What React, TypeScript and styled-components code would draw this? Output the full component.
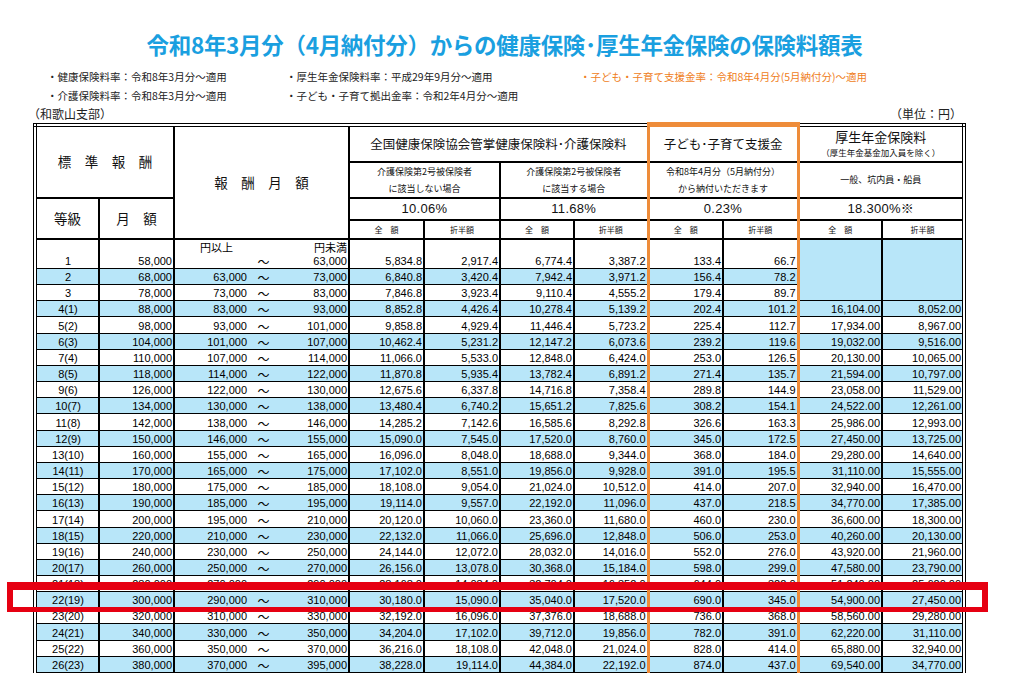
import styled, { createGlobalStyle } from 'styled-components';

const BLUE = '#b8e6f9';
const ORANGE = '#ee8c3a';

const GlobalStyle = createGlobalStyle`
  html, body {
    margin: 0;
    padding: 0;
    background: #ffffff;
  }
  body {
    font-family: "Noto Sans CJK JP", "Liberation Sans", sans-serif;
    color: #111111;
  }
`;

// 等級, 月額, 以上, 未満, 健保(全額, 折半), 介護(全額, 折半), 子ども(全額, 折半), 厚年(全額, 折半)
const rows: string[][] = [
    ['1', '58,000', '', '63,000', '5,834.8', '2,917.4', '6,774.4', '3,387.2', '133.4', '66.7'],
    ['2', '68,000', '63,000', '73,000', '6,840.8', '3,420.4', '7,942.4', '3,971.2', '156.4', '78.2'],
    ['3', '78,000', '73,000', '83,000', '7,846.8', '3,923.4', '9,110.4', '4,555.2', '179.4', '89.7'],
    ['4(1)', '88,000', '83,000', '93,000', '8,852.8', '4,426.4', '10,278.4', '5,139.2', '202.4', '101.2', '16,104.00', '8,052.00'],
    ['5(2)', '98,000', '93,000', '101,000', '9,858.8', '4,929.4', '11,446.4', '5,723.2', '225.4', '112.7', '17,934.00', '8,967.00'],
    ['6(3)', '104,000', '101,000', '107,000', '10,462.4', '5,231.2', '12,147.2', '6,073.6', '239.2', '119.6', '19,032.00', '9,516.00'],
    ['7(4)', '110,000', '107,000', '114,000', '11,066.0', '5,533.0', '12,848.0', '6,424.0', '253.0', '126.5', '20,130.00', '10,065.00'],
    ['8(5)', '118,000', '114,000', '122,000', '11,870.8', '5,935.4', '13,782.4', '6,891.2', '271.4', '135.7', '21,594.00', '10,797.00'],
    ['9(6)', '126,000', '122,000', '130,000', '12,675.6', '6,337.8', '14,716.8', '7,358.4', '289.8', '144.9', '23,058.00', '11,529.00'],
    ['10(7)', '134,000', '130,000', '138,000', '13,480.4', '6,740.2', '15,651.2', '7,825.6', '308.2', '154.1', '24,522.00', '12,261.00'],
    ['11(8)', '142,000', '138,000', '146,000', '14,285.2', '7,142.6', '16,585.6', '8,292.8', '326.6', '163.3', '25,986.00', '12,993.00'],
    ['12(9)', '150,000', '146,000', '155,000', '15,090.0', '7,545.0', '17,520.0', '8,760.0', '345.0', '172.5', '27,450.00', '13,725.00'],
    ['13(10)', '160,000', '155,000', '165,000', '16,096.0', '8,048.0', '18,688.0', '9,344.0', '368.0', '184.0', '29,280.00', '14,640.00'],
    ['14(11)', '170,000', '165,000', '175,000', '17,102.0', '8,551.0', '19,856.0', '9,928.0', '391.0', '195.5', '31,110.00', '15,555.00'],
    ['15(12)', '180,000', '175,000', '185,000', '18,108.0', '9,054.0', '21,024.0', '10,512.0', '414.0', '207.0', '32,940.00', '16,470.00'],
    ['16(13)', '190,000', '185,000', '195,000', '19,114.0', '9,557.0', '22,192.0', '11,096.0', '437.0', '218.5', '34,770.00', '17,385.00'],
    ['17(14)', '200,000', '195,000', '210,000', '20,120.0', '10,060.0', '23,360.0', '11,680.0', '460.0', '230.0', '36,600.00', '18,300.00'],
    ['18(15)', '220,000', '210,000', '230,000', '22,132.0', '11,066.0', '25,696.0', '12,848.0', '506.0', '253.0', '40,260.00', '20,130.00'],
    ['19(16)', '240,000', '230,000', '250,000', '24,144.0', '12,072.0', '28,032.0', '14,016.0', '552.0', '276.0', '43,920.00', '21,960.00'],
    ['20(17)', '260,000', '250,000', '270,000', '26,156.0', '13,078.0', '30,368.0', '15,184.0', '598.0', '299.0', '47,580.00', '23,790.00'],
    ['21(18)', '280,000', '270,000', '290,000', '28,168.0', '14,084.0', '32,704.0', '16,352.0', '644.0', '322.0', '51,240.00', '25,620.00'],
    ['22(19)', '300,000', '290,000', '310,000', '30,180.0', '15,090.0', '35,040.0', '17,520.0', '690.0', '345.0', '54,900.00', '27,450.00'],
    ['23(20)', '320,000', '310,000', '330,000', '32,192.0', '16,096.0', '37,376.0', '18,688.0', '736.0', '368.0', '58,560.00', '29,280.00'],
    ['24(21)', '340,000', '330,000', '350,000', '34,204.0', '17,102.0', '39,712.0', '19,856.0', '782.0', '391.0', '62,220.00', '31,110.00'],
    ['25(22)', '360,000', '350,000', '370,000', '36,216.0', '18,108.0', '42,048.0', '21,024.0', '828.0', '414.0', '65,880.00', '32,940.00'],
    ['26(23)', '380,000', '370,000', '395,000', '38,228.0', '19,114.0', '44,384.0', '22,192.0', '874.0', '437.0', '69,540.00', '34,770.00'],
];

const colWidths = [64, 75, 175, 75, 76, 74, 74, 75, 75, 84, 82];

function App() {
    return (
        <Page>
            <GlobalStyle />
            <Title>令和8年3月分（4月納付分）からの健康保険･厚生年金保険の保険料額表</Title>

            <Notes>
                <Note>・健康保険料率：令和8年3月分～適用</Note>
                <Note>・厚生年金保険料率：平成29年9月分～適用</Note>
                <Note $accent>・子ども・子育て支援金率：令和8年4月分(5月納付分)～適用</Note>
                <Note>・介護保険料率：令和8年3月分～適用</Note>
                <Note>・子ども・子育て拠出金率：令和2年4月分～適用</Note>
            </Notes>

            <Caption>
                <span>（和歌山支部）</span>
                <span>（単位：円）</span>
            </Caption>

            <TableViewport>
                <RateTable>
                    <colgroup>
                        {colWidths.map((w, i) => <Col key={i} $w={w} />)}
                    </colgroup>
                    <thead>
                        <HeadRow $h={37}>
                            <HeadCell colSpan={2} rowSpan={2} $fs={13.5}>標　準　報　酬</HeadCell>
                            <HeadCell rowSpan={4} $fs={13.5}>報　酬　月　額</HeadCell>
                            <HeadCell colSpan={4} $fs={12.5}>全国健康保険協会管掌健康保険料･介護保険料</HeadCell>
                            <HeadCell colSpan={2} $fs={12.5} $orangeLeft $orangeRight $orangeTop>子ども･子育て支援金</HeadCell>
                            <HeadCell colSpan={2} $fs={13}>
                                <HeadLine>厚生年金保険料</HeadLine>
                                <SubNote>（厚生年金基金加入員を除く）</SubNote>
                            </HeadCell>
                        </HeadRow>
                        <HeadRow $h={33}>
                            <HeadCell colSpan={2} $fs={9}>介護保険第2号被保険者<br />に該当しない場合</HeadCell>
                            <HeadCell colSpan={2} $fs={9}>介護保険第2号被保険者<br />に該当する場合</HeadCell>
                            <HeadCell colSpan={2} $fs={9} $orangeLeft $orangeRight>令和8年4月分（5月納付分）<br />から納付いただきます</HeadCell>
                            <HeadCell colSpan={2} $fs={9}>一般、坑内員・船員</HeadCell>
                        </HeadRow>
                        <HeadRow $h={22}>
                            <HeadCell rowSpan={2} $fs={13.5}>等級</HeadCell>
                            <HeadCell rowSpan={2} $fs={13.5}>月　額</HeadCell>
                            <RateCell colSpan={2}>10.06%</RateCell>
                            <RateCell colSpan={2}>11.68%</RateCell>
                            <RateCell colSpan={2} $orangeLeft $orangeRight>0.23%</RateCell>
                            <RateCell colSpan={2}>18.300%※</RateCell>
                        </HeadRow>
                        <HeadRow $h={16}>
                            <HeadCell $fs={8}>全　額</HeadCell>
                            <HeadCell $fs={8}>折半額</HeadCell>
                            <HeadCell $fs={8}>全　額</HeadCell>
                            <HeadCell $fs={8}>折半額</HeadCell>
                            <HeadCell $fs={8} $orangeLeft>全　額</HeadCell>
                            <HeadCell $fs={8} $orangeRight>折半額</HeadCell>
                            <HeadCell $fs={8}>全　額</HeadCell>
                            <HeadCell $fs={8}>折半額</HeadCell>
                        </HeadRow>
                    </thead>
                    <tbody>
                        {rows.map((r, i) => {
                            const blue = i % 2 === 1;
                            const first = i === 0;
                            return (
                                <DataRow key={r[0]} $h={first ? 30 : 16.16}>
                                    <DataCell $blue={blue} $align="center">{r[0]}</DataCell>
                                    <DataCell $blue={blue}>{r[1]}</DataCell>
                                    <DataCell $blue={blue}>
                                        <Range>
                                            {first && <RangeLabel>円以上</RangeLabel>}
                                            {first && <span />}
                                            {first && <RangeLabel $end>円未満</RangeLabel>}
                                            <span>{r[2]}</span>
                                            <Tilde>～</Tilde>
                                            <span>{r[3]}</span>
                                        </Range>
                                    </DataCell>
                                    <DataCell $blue={blue}>{r[4]}</DataCell>
                                    <DataCell $blue={blue}>{r[5]}</DataCell>
                                    <DataCell $blue={blue}>{r[6]}</DataCell>
                                    <DataCell $blue={blue}>{r[7]}</DataCell>
                                    <DataCell $blue={blue} $orangeLeft>{r[8]}</DataCell>
                                    <DataCell $blue={blue} $orangeRight>{r[9]}</DataCell>
                                    {first && (
                                        <>
                                            <DataCell rowSpan={3} $blue />
                                            <DataCell rowSpan={3} $blue />
                                        </>
                                    )}
                                    {i >= 3 && (
                                        <>
                                            <DataCell $blue={blue}>{r[10]}</DataCell>
                                            <DataCell $blue={blue}>{r[11]}</DataCell>
                                        </>
                                    )}
                                </DataRow>
                            );
                        })}
                        <TailRow>
                            {colWidths.map((_, i) => (
                                <DataCell key={i} $orangeLeft={i === 7} $orangeRight={i === 8} />
                            ))}
                        </TailRow>
                    </tbody>
                </RateTable>
            </TableViewport>

            <Highlight />
        </Page>
    );
}

const Page = styled.div`
    position: relative;
    width: 1009px;
    height: 688px;
    overflow: hidden;
`;

const Title = styled.h1`
    margin: 0;
    padding-top: 31px;
    text-align: center;
    font-size: 22.5px;
    line-height: 26px;
    font-weight: 700;
    color: #1a9fe0;
    letter-spacing: -0.3px;
`;

const Notes = styled.div`
    display: grid;
    grid-template-columns: 239px 294px auto;
    margin-top: 10px;
    padding-left: 47px;
    font-size: 10.5px;
    line-height: 19px;
    color: #222222;
`;

const Note = styled.div<{ $accent?: boolean }>`
    white-space: nowrap;
    color: ${props => props.$accent ? '#ef7d21' : '#222222'};
`;

const Caption = styled.div`
    display: flex;
    justify-content: space-between;
    margin-top: 1px;
    padding: 0 47px 0 28px;
    font-size: 12px;
    line-height: 16px;
    color: #222222;
`;

const TableViewport = styled.div`
    margin-left: 33px;
    height: 551px;
    overflow: hidden;
`;

const RateTable = styled.table`
    width: 933px;
    table-layout: fixed;
    border-collapse: collapse;
    border: 4px double #000000;
`;

const Col = styled.col<{ $w: number }>`
    width: ${props => props.$w}px;
`;

const HeadRow = styled.tr<{ $h: number }>`
    height: ${props => props.$h}px;
`;

type EdgeProps = { $orangeLeft?: boolean; $orangeRight?: boolean; $orangeTop?: boolean };

const HeadCell = styled.th<EdgeProps & { $fs: number }>`
    padding: 0;
    border: 2px solid #000000;
    border-left: ${props => props.$orangeLeft ? `3px solid ${ORANGE}` : '2px solid #000000'};
    border-right: ${props => props.$orangeRight ? `3px solid ${ORANGE}` : '2px solid #000000'};
    border-top: ${props => props.$orangeTop ? `5px solid ${ORANGE}` : '2px solid #000000'};
    font-size: ${props => props.$fs}px;
    font-weight: 400;
    line-height: 17px;
    color: #111111;
    text-align: center;
    vertical-align: middle;
    white-space: nowrap;
    overflow: hidden;
`;

const HeadLine = styled.div`
    font-size: 13px;
    line-height: 17px;
`;

const SubNote = styled.div`
    font-size: 8.5px;
    line-height: 14px;
`;

const RateCell = styled(HeadCell).attrs({ $fs: 13 })`
    font-family: "Liberation Sans", "Noto Sans CJK JP", sans-serif;
    font-size: 13px;
    letter-spacing: 0.3px;
`;

const DataRow = styled.tr<{ $h: number }>`
    height: ${props => props.$h}px;
`;

const TailRow = styled.tr`
    height: 6px;
`;

const DataCell = styled.td<EdgeProps & { $blue?: boolean; $align?: 'center' | 'right' }>`
    padding: 0 1px 0 2px;
    border-top: 1px solid #000000;
    border-bottom: 1px solid #000000;
    border-left: ${props => props.$orangeLeft ? `3px solid ${ORANGE}` : '2px solid #000000'};
    border-right: ${props => props.$orangeRight ? `3px solid ${ORANGE}` : '2px solid #000000'};
    background: ${props => props.$blue ? BLUE : '#ffffff'};
    font-family: "Liberation Sans", "Noto Sans CJK JP", sans-serif;
    font-size: 11px;
    line-height: 13px;
    color: #000000;
    text-align: ${props => props.$align ?? 'right'};
    vertical-align: bottom;
    white-space: nowrap;
    overflow: hidden;
`;

const Range = styled.div`
    display: grid;
    grid-template-columns: 70px 33px 1fr;
    align-items: end;
    text-align: right;
`;

const RangeLabel = styled.span<{ $end?: boolean }>`
    font-family: "Noto Sans CJK JP", sans-serif;
    font-size: 11px;
    line-height: 15px;
    padding-right: ${props => props.$end ? 0 : 14}px;
`;

const Tilde = styled.span`
    font-family: "Noto Sans CJK JP", sans-serif;
    font-size: 12px;
    line-height: 13px;
    text-align: center;
`;

const Highlight = styled.div`
    position: absolute;
    left: 7px;
    top: 582px;
    width: 981px;
    height: 30px;
    box-sizing: border-box;
    border: 6px solid #e60012;
    border-top-width: 8px;
    border-bottom-width: 5px;
    pointer-events: none;
`;

export default App;
